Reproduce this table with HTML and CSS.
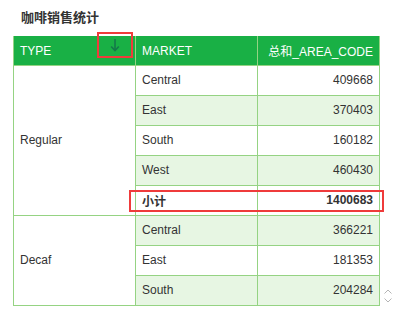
FILE: index.html
```html
<!DOCTYPE html>
<html>
<head>
<meta charset="utf-8">
<link rel="stylesheet" href="styles.css">
</head>
<body>
<div class="page">
  <div class="title">咖啡销售统计</div>
  <div class="table-wrap">
    <table class="grid">
      <thead>
        <tr>
          <th class="type-th">TYPE<span class="sort-box"><svg class="sort-arrow" width="10" height="14" viewBox="0 0 10 14"><path d="M5 1 V12.5" stroke="#14784a" stroke-width="1.6" fill="none"/><path d="M1.2 8.5 L5 12.5 L8.8 8.5" stroke="#14784a" stroke-width="1.6" fill="none"/></svg></span></th>
          <th>MARKET</th>
          <th class="num">总和_AREA_CODE</th>
        </tr>
      </thead>
      <tbody>
        <tr><td class="group" rowspan="5">Regular</td><td>Central</td><td class="num">409668</td></tr>
        <tr class="alt"><td>East</td><td class="num">370403</td></tr>
        <tr><td>South</td><td class="num">160182</td></tr>
        <tr class="alt"><td>West</td><td class="num">460430</td></tr>
        <tr class="subtotal"><td>小计</td><td class="num">1400683</td></tr>
        <tr class="alt"><td class="group" rowspan="3">Decaf</td><td>Central</td><td class="num">366221</td></tr>
        <tr><td>East</td><td class="num">181353</td></tr>
        <tr class="alt"><td>South</td><td class="num">204284</td></tr>
      </tbody>
    </table>
    <div class="highlight-box"></div>
    <svg class="scroll-icon" width="10" height="16" viewBox="0 0 10 16"><path d="M1.5 5.5 L5 2 L8.5 5.5" fill="none" stroke="#b5b5b5" stroke-width="1"/><path d="M1.5 10.5 L5 14 L8.5 10.5" fill="none" stroke="#b5b5b5" stroke-width="1"/></svg>
  </div>
</div>
</body>
</html>
```

FILE: styles.css
```css
html, body {
  margin: 0;
  padding: 0;
  background: #ffffff;
}
body {
  font-family: "Liberation Sans", Arial, "Noto Sans CJK SC", sans-serif;
  color: #333333;
}
.page {
  padding: 10px 0 0 13px;
}
.title {
  font-size: 13px;
  font-weight: bold;
  line-height: 16px;
  height: 26px;
  padding-left: 8px;
  color: #333333;
}
.table-wrap {
  position: relative;
  width: 366px;
}
.grid {
  border-collapse: collapse;
  width: 367px;
  table-layout: fixed;
  font-size: 12px;
}
.grid th, .grid td {
  border: 1px solid #95d383;
  height: 29px;
  padding: 0 6px;
  box-sizing: border-box;
  text-align: left;
  white-space: nowrap;
}
.grid th {
  background: #19b045;
  color: #ffffff;
  font-weight: normal;
  height: 29px;
  border-top: none;
  border-color: #95d383;
  padding-top: 1px;
}
.grid td {
  height: 30px;
}
.grid th.num, .grid td.num {
  text-align: right;
}
.grid tr.alt td {
  background: #e7f6e3;
}
.grid td.group {
  background: #ffffff;
}
.grid tr.alt td.group {
  background: #ffffff;
}
.grid tr.subtotal td {
  font-weight: bold;
  background: #ffffff;
}
.type-th {
  position: relative;
}
.sort-box {
  position: absolute;
  left: 83px;
  top: -4px;
  width: 32px;
  height: 22px;
  border: 2px solid #ef3b3b;
}
.sort-arrow {
  position: absolute;
  left: 11px;
  top: 4px;
}
.highlight-box {
  position: absolute;
  left: 116px;
  top: 154px;
  width: 251px;
  height: 18px;
  border: 2px solid #ef3b3b;
}
.scroll-icon {
  position: absolute;
  left: 370px;
  top: 252px;
}
```
